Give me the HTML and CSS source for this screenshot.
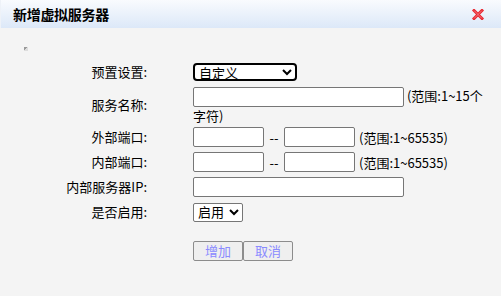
FILE: index.html
```html
<!DOCTYPE html>
<html lang="zh-CN">
<head>
    <meta charset="UTF-8">
    <title>新增虚拟服务器</title>
    <link rel="stylesheet" href="styles.css">
</head>
<body>
    <div class="titlebar">
        <span class="title">新增虚拟服务器</span>
        <svg class="close" width="12" height="11" viewBox="0 0 12 11">
            <path d="M2 1.5 L10 9.5 M10 1.5 L2 9.5" stroke="#e8242c" stroke-width="3" stroke-linecap="square"/>
            <path d="M2 1.5 L10 9.5 M10 1.5 L2 9.5" stroke="#f47b84" stroke-width="1"/>
        </svg>
    </div>

    <div class="content">
        <span class="broken"></span>

        <div class="form">
            <label>预置设置:</label>
            <div><select class="sel-preset"><option>自定义</option></select></div>

            <label>服务名称:</label>
            <div class="wrap"><input type="text" class="wide"> (范围:1~15个字符)</div>

            <label>外部端口:</label>
            <div><input type="text" class="port"><span class="dash">--</span><input type="text" class="port"><span class="hint">(范围:1~65535)</span></div>

            <label>内部端口:</label>
            <div><input type="text" class="port"><span class="dash">--</span><input type="text" class="port"><span class="hint">(范围:1~65535)</span></div>

            <label>内部服务器IP:</label>
            <div><input type="text" class="wide"></div>

            <label>是否启用:</label>
            <div><select class="sel-on"><option>启用</option><option>禁用</option></select></div>

            <span></span>
            <div class="btns"><button disabled>增加</button><button disabled>取消</button></div>
        </div>
    </div>
</body>
</html>
```

FILE: styles.css
```css
body { margin: 0; background: #f4f4f4; font-family: "Noto Sans CJK SC", "DejaVu Sans", sans-serif; font-size: 13px; color: #000; }
.titlebar { height: 28px; display: flex; align-items: center; justify-content: space-between; padding: 0 17px 0 12px; background: linear-gradient(#f9fbfe, #dce8f8); border-left: 1px solid #eef2f8; }
.title { font-weight: bold; font-size: 14px; letter-spacing: -0.3px; }
.close { display: block; }
.content { padding-top: 19px; }
.broken { display: block; width: 4px; height: 4px; margin-left: 24px; background: linear-gradient(135deg, #999 50%, #ddd 50%); }
.form { display: grid; grid-template-columns: 150px 300px; column-gap: 43px; row-gap: 5px; align-items: center; margin-top: 11px; }
.form label { text-align: right; padding-right: 3px; line-height: 18px; }
.form > div { display: flex; align-items: center; height: 20px; white-space: nowrap; }
.form > div.wrap { display: block; height: 35px; line-height: 17px; white-space: normal; }
.wrap input { vertical-align: top; }
input { box-sizing: border-box; height: 20px; border: 1px solid #767676; border-radius: 2px; background: #fff; margin: 0; padding: 0 2px; }
.wide { width: 211px; }
.port { width: 71px; }
.dash { width: 20px; text-align: center; }
.hint { margin-left: 4px; }
select { font-family: "Liberation Sans", "Noto Sans CJK SC", sans-serif; font-size: 13px; margin: 0; background: #fff; color: #000; padding: 0; }
.sel-preset { width: 104px; height: 18px; border: 2px solid #000; border-radius: 4px; }
.sel-on { width: 50px; height: 19px; border: 1px solid #767676; border-radius: 2px; }
.form > div.btns { margin-top: 14px; height: 20px; }
button { box-sizing: border-box; width: 50px; height: 20px; padding: 0; font-family: inherit; font-size: 13px; line-height: 18px; color: #8a8aff; background: #efefef; border: 1px solid #8c8c8c; border-radius: 2px; }
```
